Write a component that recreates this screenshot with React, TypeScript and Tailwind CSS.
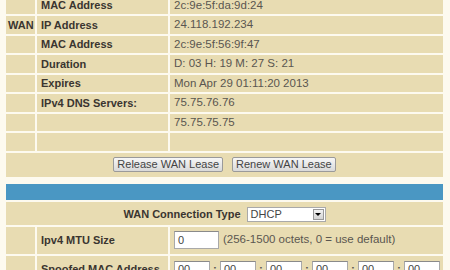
import React from 'react';

const rows: [string, string, string][] = [
  ['', 'MAC Address', '2c:9e:5f:da:9d:24'],
  ['WAN', 'IP Address', '24.118.192.234'],
  ['', 'MAC Address', '2c:9e:5f:56:9f:47'],
  ['', 'Duration', 'D: 03 H: 19 M: 27 S: 21'],
  ['', 'Expires', 'Mon Apr 29 01:11:20 2013'],
  ['', 'IPv4 DNS Servers:', '75.75.76.76'],
  ['', '', '75.75.75.75'],
  ['', '', ''],
];

function Btn({ children }: { children: React.ReactNode }) {
  return (
    <div className="h-[15px] px-[3px] flex items-center rounded-[2px] border border-[#9a9a9a] bg-gradient-to-b from-[#f7f7f7] to-[#d9d9d9] text-[11px] leading-none text-[#444]">
      {children}
    </div>
  );
}

function Field({ value, w }: { value: string; w: string }) {
  return (
    <div className={`${w} h-[18px] bg-white border border-[#a9a9a9] border-t-[#8a8a8a] pl-[3px] flex items-center text-[11px] text-[#444]`}>
      {value}
    </div>
  );
}

export default function App() {
  return (
    <div className="w-[450px] h-[270px] overflow-hidden bg-[#fdfaef] font-['Liberation_Sans',Arial,sans-serif]">
      <div className="ml-[6px] -mt-[3.5px] grid grid-cols-[29px_131px_273px] gap-[2px]">
        {rows.map(([a, b, c], i) => (
          <React.Fragment key={i}>
            <div className="h-[17.5px] bg-[#e8dcb2] pl-[2px] flex items-center text-[11px] font-bold text-[#3a3530]">{a}</div>
            <div className="h-[17.5px] bg-[#e8dcb2] pl-[4px] flex items-center text-[11px] font-bold text-[#3a3530]">{b}</div>
            <div className="h-[17.5px] bg-[#e8dcb2] pl-[4px] flex items-center text-[11.5px] text-[#5a5650]">{c}</div>
          </React.Fragment>
        ))}
        <div className="col-span-3 h-[24px] bg-[#e8dcb2] flex items-center justify-center gap-[9px]">
          <Btn>Release WAN Lease</Btn>
          <Btn>Renew WAN Lease</Btn>
        </div>
        <div className="col-span-3 h-[7px] -my-[2px] bg-[#fdfaef]" />
        <div className="col-span-3 h-[16px] bg-[#4a97c3]" />
        <div className="col-span-3 h-[23px] bg-[#e8dcb2] flex items-center justify-center gap-[6px] pt-[2px]">
          <span className="text-[11px] font-bold text-[#3a3530]">WAN Connection Type</span>
          <div className="w-[79px] h-[15px] bg-white border border-[#a9a9a9] flex items-center justify-between">
            <span className="pl-[3px] text-[11px] text-[#444]">DHCP</span>
            <div className="w-[11px] h-[11px] mr-[1px] bg-gradient-to-b from-[#f2f2f2] to-[#d4d4d4] border border-[#999] flex items-center justify-center">
              <div className="w-0 h-0 border-l-[3px] border-r-[3px] border-t-[3px] border-l-transparent border-r-transparent border-t-black" />
            </div>
          </div>
        </div>
        <div className="h-[27px] bg-[#e8dcb2]" />
        <div className="h-[27px] bg-[#e8dcb2] pl-[4px] flex items-center text-[11px] font-bold text-[#3a3530]">Ipv4 MTU Size</div>
        <div className="h-[27px] bg-[#e8dcb2] pl-[4px] flex items-center gap-[4px] text-[11.5px] text-[#5a5650]">
          <Field value="0" w="w-[45px]" />
          <span>(256-1500 octets, 0 = use default)</span>
        </div>
        <div className="h-[27px] bg-[#e8dcb2]" />
        <div className="h-[27px] bg-[#e8dcb2] pl-[4px] pt-[5px] text-[11px] font-bold text-[#3a3530]">Spoofed MAC Address</div>
        <div className="h-[27px] bg-[#e8dcb2] pl-[4px] pt-[5px] flex items-start text-[11.5px] text-[#5a5650]">
          {[0, 1, 2, 3, 4, 5].map((k) => (
            <React.Fragment key={k}>
              {k > 0 && <span className="w-[10px] text-center font-bold">:</span>}
              <Field value="00" w="w-[36px]" />
            </React.Fragment>
          ))}
        </div>
      </div>
    </div>
  );
}
